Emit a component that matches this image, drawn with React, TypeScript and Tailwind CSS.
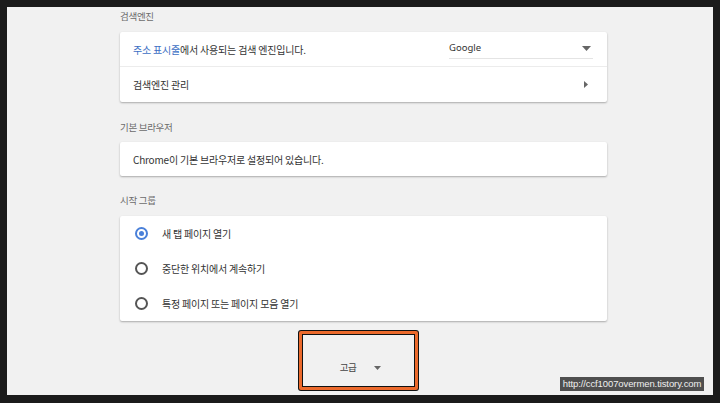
const kr = "font-['Noto_Sans_CJK_KR','Noto_Sans',sans-serif]";
const body = "text-[10px] tracking-[-0.2px] text-[#333]";

function Radio({ checked }: { checked?: boolean }) {
  return checked ? (
    <span className="flex h-[13px] w-[13px] items-center justify-center rounded-full border-2 border-[#4a80d9]">
      <span className="h-[5px] w-[5px] rounded-full bg-[#4a80d9]" />
    </span>
  ) : (
    <span className="h-[13px] w-[13px] rounded-full border-2 border-[#555]" />
  );
}

function Heading({ children, className }: { children: string; className: string }) {
  return (
    <div className={`text-[9.5px] leading-[18px] tracking-[-0.3px] text-[#6b6b6b] ${className}`}>
      {children}
    </div>
  );
}

export default function App() {
  const startOptions = [
    { label: "새 탭 페이지 열기", checked: true },
    { label: "중단한 위치에서 계속하기", checked: false },
    { label: "특정 페이지 또는 페이지 모음 열기", checked: false },
  ];

  return (
    <div className={`h-[403px] w-[720px] overflow-hidden bg-[#1b1b1b] pb-[8px] pl-[7px] pr-[7px] pt-[7px] ${kr}`}>
      <div className="relative h-full bg-[#f1f1f1] pl-[113px]">
        <div className="w-[487px]">
          <Heading className="mb-[7px]">검색엔진</Heading>
          <div className="rounded-[2px] bg-white shadow-[0_1px_2px_rgba(0,0,0,0.3)]">
            <div className="flex h-[35px] items-center border-b border-[#ececec] px-[13px]">
              <span className={`flex-1 ${body}`}>
                <span className="text-[#3d6fc4]">주소 표시줄</span>에서 사용되는 검색 엔진입니다.
              </span>
              <div className="mr-[1px] flex h-[20px] w-[144px] items-center justify-between border-b border-[#e4e4e4]">
                <span className="font-['Noto_Sans',sans-serif] text-[9.5px] text-[#333]">Google</span>
                <svg width="9" height="5" viewBox="0 0 9 5" className="mr-[2px]">
                  <path d="M0 0h9L4.5 5z" fill="#666" />
                </svg>
              </div>
            </div>
            <div className="flex h-[35px] items-center px-[13px]">
              <span className={`flex-1 ${body}`}>검색엔진 관리</span>
              <svg width="4" height="7" viewBox="0 0 4 7" className="mr-[6px]">
                <path d="M0 0l4 3.5L0 7z" fill="#666" />
              </svg>
            </div>
          </div>

          <Heading className="mb-[6px] mt-[16px]">기본 브라우저</Heading>
          <div className="flex h-[34px] items-center rounded-[2px] bg-white px-[13px] shadow-[0_1px_2px_rgba(0,0,0,0.3)]">
            <span className={body}>Chrome이 기본 브라우저로 설정되어 있습니다.</span>
          </div>

          <Heading className="mb-[7px] mt-[15px]">시작 그룹</Heading>
          <div className="rounded-[2px] bg-white shadow-[0_1px_2px_rgba(0,0,0,0.3)]">
            {startOptions.map((o) => (
              <div key={o.label} className="flex h-[35px] items-center px-[15px]">
                <Radio checked={o.checked} />
                <span className={`ml-[14px] ${body}`}>{o.label}</span>
              </div>
            ))}
          </div>

          <div className="ml-[178px] mt-[9px] flex h-[61px] w-[121px] rounded-[3px] bg-[#111] p-[1px]">
            <div className="flex flex-1 rounded-[2px] bg-[#ec6a2c] p-[3px]">
              <div className="flex flex-1 items-center justify-center gap-[18px] border border-[#111] bg-[#f1f1f1] pl-[4px] pt-[14px]">
                <span className="text-[9.5px] tracking-[-0.4px] text-[#444]">고급</span>
                <svg width="7" height="4" viewBox="0 0 7 4">
                  <path d="M0 0h7L3.5 4z" fill="#666" />
                </svg>
              </div>
            </div>
          </div>
        </div>

        <div className="absolute left-[553px] top-[370px] flex h-[14px] w-[144px] items-center justify-center bg-[#4f4f4f] font-['Liberation_Sans',sans-serif] text-[9.5px] tracking-[-0.1px] text-[#f0f0f0]">
          http://ccf1007overmen.tistory.com
        </div>
      </div>
    </div>
  );
}
